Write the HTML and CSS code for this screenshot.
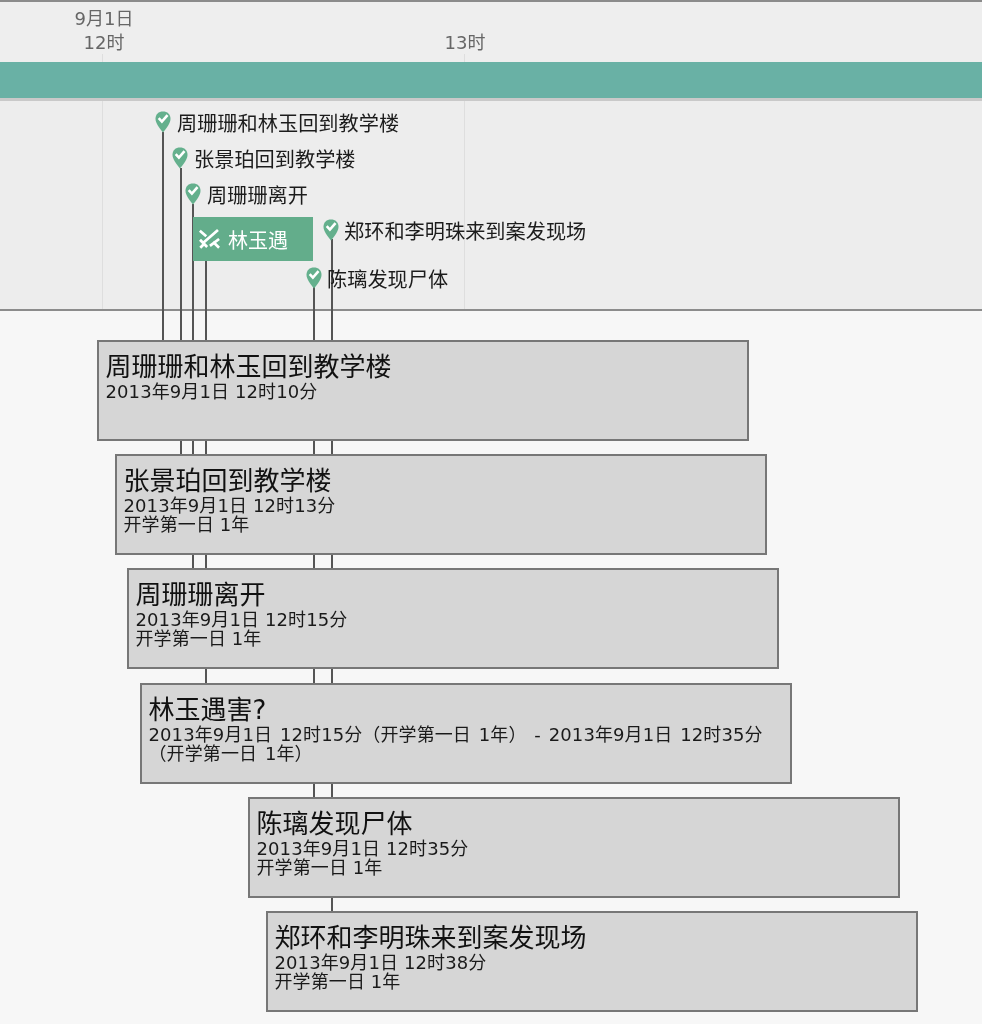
FILE: index.html
```html
<!DOCTYPE html>
<html lang="zh">
<head>
<meta charset="utf-8">
<title>时间线</title>
<link rel="stylesheet" href="styles.css">
</head>
<body>
<div class="timeline">
  <header class="axis">
    <i class="grid grid-a"></i><i class="grid grid-b"></i>
    <div class="tick tick-a"><span>9月1日</span><span>12时</span></div>
    <div class="tick tick-b"><span>13时</span></div>
  </header>
  <div class="era"></div>
  <div class="track">
    <i class="grid grid-a"></i><i class="grid grid-b"></i>

    <div class="stem s1"></div><div class="stem s2"></div><div class="stem s3"></div>
    <div class="stem s4"></div><div class="stem s5"></div><div class="stem s6"></div>

    <div class="marker m1"><svg class="pin" viewBox="0 0 16 22"><path class="pin-b" d="M8 .5C3.600.5.500 3.200.500 7.800c0 4.300 3.700 9.200 7.500 13.700 3.800-4.500 7.500-9.400 7.500-13.700C15.500 3.200 12.400.5 8 .5z"/><path class="pin-c" d="M3.700 7.200l3.200 3.400 5.600-6.400"/></svg><span>周珊珊和林玉回到教学楼</span></div>
    <div class="marker m2"><svg class="pin" viewBox="0 0 16 22"><path class="pin-b" d="M8 .5C3.600.5.500 3.200.500 7.800c0 4.300 3.700 9.200 7.500 13.700 3.800-4.500 7.500-9.400 7.500-13.700C15.500 3.200 12.400.5 8 .5z"/><path class="pin-c" d="M3.700 7.200l3.200 3.400 5.600-6.400"/></svg><span>张景珀回到教学楼</span></div>
    <div class="marker m3"><svg class="pin" viewBox="0 0 16 22"><path class="pin-b" d="M8 .5C3.600.5.500 3.200.500 7.800c0 4.300 3.700 9.200 7.500 13.700 3.800-4.500 7.500-9.400 7.500-13.700C15.500 3.200 12.400.5 8 .5z"/><path class="pin-c" d="M3.700 7.200l3.200 3.400 5.600-6.400"/></svg><span>周珊珊离开</span></div>
    <div class="marker m6"><svg class="pin" viewBox="0 0 16 22"><path class="pin-b" d="M8 .5C3.600.5.500 3.200.500 7.800c0 4.300 3.700 9.200 7.500 13.700 3.800-4.500 7.500-9.400 7.500-13.700C15.500 3.200 12.400.5 8 .5z"/><path class="pin-c" d="M3.700 7.200l3.200 3.400 5.600-6.400"/></svg><span>郑环和李明珠来到案发现场</span></div>
    <div class="marker m5"><svg class="pin" viewBox="0 0 16 22"><path class="pin-b" d="M8 .5C3.600.5.500 3.200.500 7.800c0 4.300 3.700 9.200 7.500 13.700 3.800-4.500 7.500-9.400 7.500-13.700C15.500 3.200 12.400.5 8 .5z"/><path class="pin-c" d="M3.700 7.200l3.200 3.400 5.600-6.400"/></svg><span>陈璃发现尸体</span></div>

    <div class="span-event">
      <svg class="swords" viewBox="0 0 24 24"><path class="sw" d="M21.800 2.200L5.500 16.400M2.200 12.800l7.800 8M2.500 21.500l4-4"/><path class="sw" d="M2 3l7 6M13 19.500L23 12M16.400 15l6.600 6.500"/></svg>
      <span>林玉遇</span>
    </div>
  </div>

  <article class="card c1">
    <h2>周珊珊和林玉回到教学楼</h2>
    <p>2013年9月1日 12时10分</p>
  </article>
  <article class="card c2">
    <h2>张景珀回到教学楼</h2>
    <p>2013年9月1日 12时13分</p>
    <p>开学第一日 1年</p>
  </article>
  <article class="card c3">
    <h2>周珊珊离开</h2>
    <p>2013年9月1日 12时15分</p>
    <p>开学第一日 1年</p>
  </article>
  <article class="card c4">
    <h2>林玉遇害?</h2>
    <p>2013年9月1日 12时15分（开学第一日 1年） - 2013年9月1日 12时35分<br>（开学第一日 1年）</p>
  </article>
  <article class="card c5">
    <h2>陈璃发现尸体</h2>
    <p>2013年9月1日 12时35分</p>
    <p>开学第一日 1年</p>
  </article>
  <article class="card c6">
    <h2>郑环和李明珠来到案发现场</h2>
    <p>2013年9月1日 12时38分</p>
    <p>开学第一日 1年</p>
  </article>
</div>
</body>
</html>
```
FILE: styles.css
```css
* { box-sizing: border-box; }
html, body { margin: 0; padding: 0; }
body {
  background: #f7f7f7;
  font-family: "DejaVu Sans", "Noto Sans CJK SC", sans-serif;
  overflow: hidden;
}
.timeline {
  position: relative;
  width: 982px;
  height: 1024px;
  overflow: hidden;
  filter: blur(0.4px);
}
.axis {
  position: relative;
  height: 62px;
  background: #eeeeee;
  border-top: 2px solid #8b8b8b;
}
.axis .grid { top: 52px; }
.tick {
  position: absolute;
  display: flex;
  flex-direction: column;
  align-items: center;
  color: #666;
  font-size: 18px;
  line-height: 24px;
}
.tick-a { left: 64px; top: 5px; width: 80px; }
.tick-b { left: 425px; top: 29px; width: 80px; }
.era {
  height: 36px;
  background: #69b1a5;
}
.track {
  position: relative;
  height: 213px;
  background: #ededed;
  border-top: 3px solid #c9c9c9;
  border-bottom: 2px solid #8c8c8c;
}
.grid {
  position: absolute;
  top: 0;
  bottom: 0;
  width: 1px;
  background: #dedede;
}
.grid-a { left: 102px; }
.grid-b { left: 464px; }

.stem {
  position: absolute;
  width: 1.500px;
  background: #555;
}
.s1 { left: 162px; top: 31px; height: 208px; }
.s2 { left: 180px; top: 67px; height: 286px; }
.s3 { left: 192px; top: 103px; height: 364px; }
.s4 { left: 205px; top: 159px; height: 423px; }
.s5 { left: 313px; top: 186px; height: 510px; }
.s6 { left: 331px; top: 138px; height: 672px; }

.marker {
  position: absolute;
  display: flex;
  align-items: center;
  gap: 6px;
  height: 22px;
  color: #1c1c1c;
  font-size: 20.200px;
  white-space: nowrap;
}
.m1 { left: 155px; top: 10px; }
.m2 { left: 172px; top: 46px; }
.m3 { left: 185px; top: 82px; }
.m6 { left: 323px; top: 118px; gap: 5px; }
.m5 { left: 306px; top: 166px; gap: 5px; }
.pin { width: 16px; height: 22px; flex: none; }
.pin-b { fill: #64b08d; }
.pin-c { fill: none; stroke: #fff; stroke-width: 2.600; }

.span-event {
  position: absolute;
  left: 193px;
  top: 116px;
  width: 120px;
  height: 44px;
  display: flex;
  align-items: center;
  gap: 8px;
  padding-left: 5px;
  background: #63ad8b;
  color: #fff;
  font-size: 20px;
  white-space: nowrap;
}
.swords { width: 22px; height: 22px; flex: none; }
.sw { fill: none; stroke: #fff; stroke-width: 3; }

.card {
  position: absolute;
  width: 652px;
  height: 100.500px;
  padding: 10px 6.500px 0;
  background: #d6d6d6;
  border: 2px solid #777;
  color: #1a1a1a;
}
.card h2 {
  margin: 0;
  font-size: 26px;
  font-weight: 400;
  line-height: 30px;
  color: #111;
}
.card p {
  margin: 0;
  font-size: 18px;
  line-height: 19px;
  letter-spacing: 0.100px;
}
.c4 p { word-spacing: 2px; }
.c1 { left: 97px; top: 340px; }
.c2 { left: 115px; top: 454px; }
.c3 { left: 127px; top: 568px; }
.c4 { left: 140px; top: 683px; }
.c5 { left: 248px; top: 797px; }
.c6 { left: 266px; top: 911px; }
```
